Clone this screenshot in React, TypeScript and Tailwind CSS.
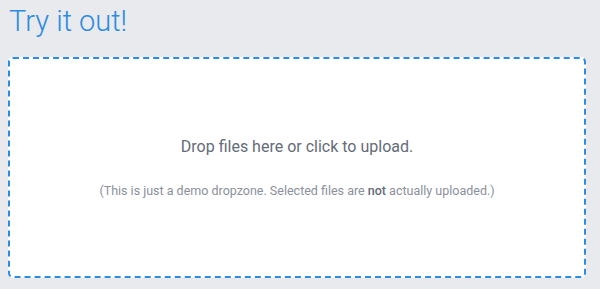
export default function App() {
  return (
    <div className="w-[600px] h-[289px] bg-[#e9eaee] px-2 pt-[1px] font-['Roboto',sans-serif] overflow-hidden">
      <h1 className="text-[29px] leading-[40px] font-light text-[#2c8ce0] pl-[1px]">Try it out!</h1>
      <div className="mt-[16px] w-[578px] h-[221px] bg-white border-2 border-dashed border-[#2c8ce0] rounded-[5px] flex flex-col items-center justify-center">
        <p className="text-[16px] text-[#646b79]">Drop files here or click to upload.</p>
        <p className="text-[12.5px] text-[#8b909b] mt-[23px]">
          (This is just a demo dropzone. Selected files are <span className="font-medium text-[#646b79]">not</span> actually uploaded.)
        </p>
      </div>
    </div>
  );
}
